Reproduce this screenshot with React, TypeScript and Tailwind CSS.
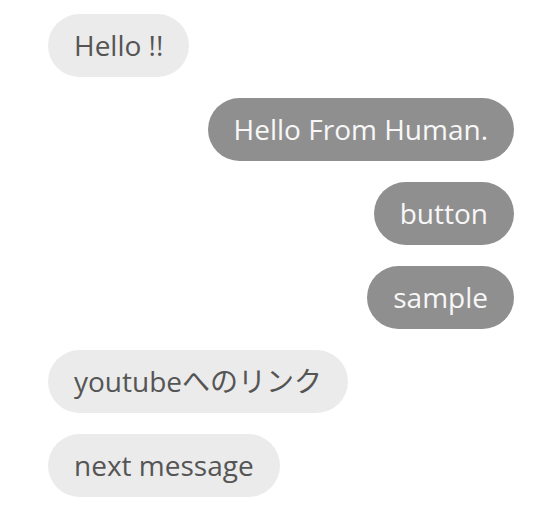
import React from "react";

const messages: { text: string; me: boolean }[] = [
  { text: "Hello !!", me: false },
  { text: "Hello From Human.", me: true },
  { text: "button", me: true },
  { text: "sample", me: true },
  { text: "youtubeへのリンク", me: false },
  { text: "next message", me: false },
];

export default function App() {
  return (
    <div
      className="w-[546px] h-[532px] bg-white pt-[14px] pl-[48px] pr-[32px] flex flex-col gap-[21px]"
      style={{ fontFamily: '"Open Sans", "Noto Sans CJK JP", sans-serif' }}
    >
      {messages.map((m, i) => (
        <div key={i} className={m.me ? "flex justify-end" : "flex justify-start"}>
          <div
            className={
              m.me
                ? "rounded-full bg-[#8f8f8f] text-[#f7f7f7] text-[28px] leading-[39px] px-[26px] py-[12px] whitespace-nowrap"
                : "rounded-full bg-[#ebebeb] text-[#555555] text-[28px] leading-[39px] px-[26px] py-[12px] whitespace-nowrap"
            }
          >
            {m.text}
          </div>
        </div>
      ))}
    </div>
  );
}
